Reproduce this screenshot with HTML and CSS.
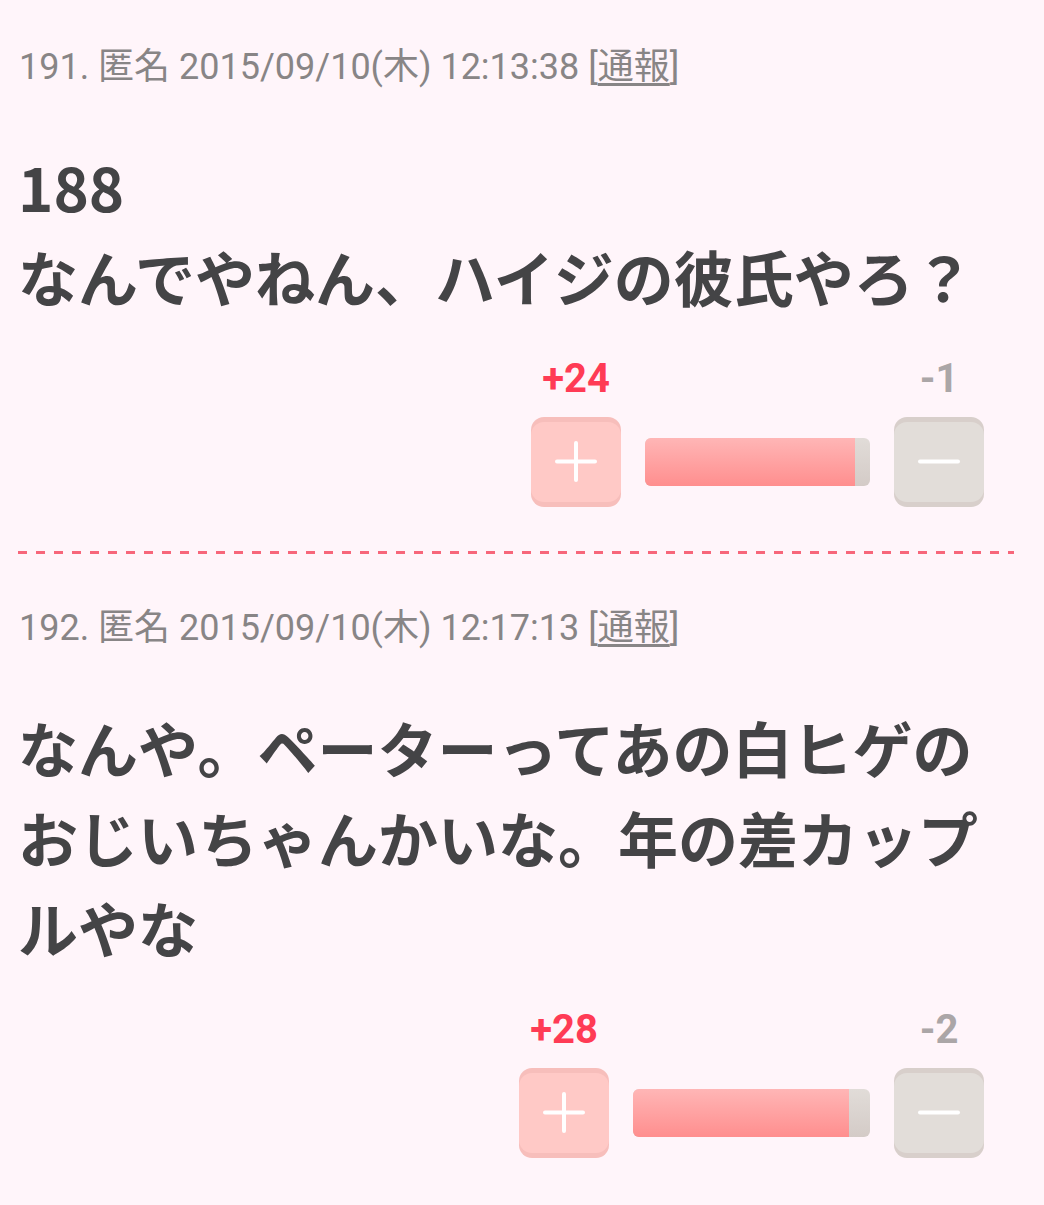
FILE: index.html
```html
<!DOCTYPE html>
<html lang="ja">
<head>
  <meta charset="UTF-8" />
  <meta name="viewport" content="width=device-width, initial-scale=1.0" />
  <title>コメント</title>
  <link rel="stylesheet" href="styles.css">
</head>
<body>
  <div class="thread">

    <div class="comment">
      <div class="meta">191. 匿名 2015/09/10(木) 12:13:38 [<a href="#">通報</a>]</div>
      <div class="text">188<br>なんでやねん、ハイジの彼氏やろ？</div>
      <div class="vote">
        <div class="vote-col">
          <span class="count count-plus">+24</span>
          <button class="btn btn-plus" aria-label="plus">
            <span class="face">
              <svg width="44" height="44" viewBox="0 0 44 44"><path d="M22 3v37M3 21.5h38" stroke="#fff" stroke-width="4" stroke-linecap="round" fill="none"/></svg>
            </span>
          </button>
        </div>
        <div class="bar" style="width:225px"><span class="fill" style="width:93.3%"></span></div>
        <div class="vote-col">
          <span class="count count-minus">-1</span>
          <button class="btn btn-minus" aria-label="minus">
            <span class="face">
              <svg width="44" height="44" viewBox="0 0 44 44"><path d="M3 21.5h38" stroke="#fff" stroke-width="4" stroke-linecap="round" fill="none"/></svg>
            </span>
          </button>
        </div>
      </div>
    </div>

    <div class="divider"></div>

    <div class="comment">
      <div class="meta">192. 匿名 2015/09/10(木) 12:17:13 [<a href="#">通報</a>]</div>
      <div class="text">なんや。ペーターってあの白ヒゲのおじいちゃんかいな。年の差カップルやな</div>
      <div class="vote">
        <div class="vote-col">
          <span class="count count-plus">+28</span>
          <button class="btn btn-plus" aria-label="plus">
            <span class="face">
              <svg width="44" height="44" viewBox="0 0 44 44"><path d="M22 3v37M3 21.5h38" stroke="#fff" stroke-width="4" stroke-linecap="round" fill="none"/></svg>
            </span>
          </button>
        </div>
        <div class="bar" style="width:237px"><span class="fill" style="width:91.1%"></span></div>
        <div class="vote-col">
          <span class="count count-minus">-2</span>
          <button class="btn btn-minus" aria-label="minus">
            <span class="face">
              <svg width="44" height="44" viewBox="0 0 44 44"><path d="M3 21.5h38" stroke="#fff" stroke-width="4" stroke-linecap="round" fill="none"/></svg>
            </span>
          </button>
        </div>
      </div>
    </div>

  </div>
</body>
</html>
```

FILE: styles.css
```css
:root {
  --bg: #fff5fa;
  --text-dark: #444446;
  --text-muted: #888586;
  --plus: #ff3b55;
  --minus: #aba6a7;
  --dash: #f7667a;
}

* {
  box-sizing: border-box;
}

body {
  margin: 0;
  background-color: var(--bg);
  color: var(--text-dark);
  font-family: "Noto Sans CJK JP", sans-serif;
}

.thread {
  padding: 47px 18px 45px;
}

.meta {
  font-family: Roboto, "Noto Sans CJK JP", sans-serif;
  font-size: 36px;
  line-height: 40px;
  color: var(--text-muted);
  padding-left: 1px;
}

.meta a {
  color: var(--text-muted);
  text-decoration: underline;
  text-underline-offset: 4px;
}

.text {
  margin-top: 54px;
  font-size: 60px;
  line-height: 90px;
  font-weight: 700;
  padding-right: 10px;
}

.vote {
  display: flex;
  justify-content: flex-end;
  align-items: flex-end;
  gap: 24px;
  margin-top: 38px;
  margin-right: 42px;
}

.vote-col {
  display: flex;
  flex-direction: column;
  align-items: center;
}

.count {
  font-family: Roboto, sans-serif;
  font-weight: 700;
  font-size: 40px;
  line-height: 40px;
  margin-bottom: 18px;
}

.count-plus {
  color: var(--plus);
}

.count-minus {
  color: var(--minus);
}

.btn {
  width: 90px;
  height: 90px;
  padding: 0;
  border: none;
  border-radius: 13px;
  display: block;
  cursor: pointer;
}

.btn .face {
  display: flex;
  align-items: center;
  justify-content: center;
  height: 80px;
  border-radius: 13px;
}

.btn-plus {
  background-color: #f7bebb;
}

.btn-plus .face {
  background-color: #ffc9c6;
}

.btn-minus {
  background-color: #d8cfcb;
}

.btn-minus .face {
  background-color: #e2ddd9;
}

.bar {
  height: 48px;
  margin-bottom: 21px;
  border-radius: 6px;
  overflow: hidden;
  background: linear-gradient(#e1dcd8, #d4cbc7);
}

.fill {
  display: block;
  height: 100%;
  background: linear-gradient(#ffb6b6, #ff8e8e);
}

.divider {
  height: 3px;
  margin: 44px 12px 54px 0;
  background: repeating-linear-gradient(to right, var(--dash) 0 9px, transparent 9px 18px);
}
```
